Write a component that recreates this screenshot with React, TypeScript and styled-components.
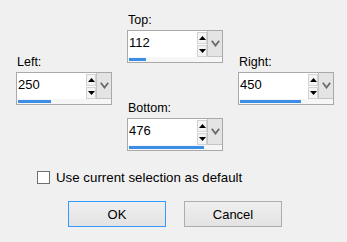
import React from "react";
import styled, { createGlobalStyle } from "styled-components";

const Global = createGlobalStyle`
  html, body { margin: 0; padding: 0; background: #f0f0f0; }
  body {
    font-family: "Liberation Sans", Arial, sans-serif;
    font-size: 12px;
    color: #000;
    width: 347px;
    height: 242px;
    overflow: hidden;
  }
`;

const Dialog = styled.div`
  width: 347px;
  height: 242px;
  box-sizing: border-box;
  padding: 0 0 0 16px;
  display: flex;
  flex-direction: column;
`;

const Fields = styled.div`
  display: flex;
  gap: 15px;
`;

const Column = styled.div<{ $offset: number }>`
  width: 96px;
  display: flex;
  flex-direction: column;
  gap: 38px;
  padding-top: ${(p) => p.$offset}px;
`;

const Field = styled.div`
  display: flex;
  flex-direction: column;
`;

const Label = styled.div`
  height: 15px;
  line-height: 15px;
  font-size: 12.5px;
  margin-bottom: 2px;
  padding-left: 1px;
`;

const SpinBox = styled.div`
  width: 96px;
  height: 33px;
  box-sizing: border-box;
  border: 1px solid #a9a9a9;
  background: #fff;
  display: flex;
  flex-direction: column;
`;

const InputRow = styled.div`
  height: 26px;
  display: flex;
`;

const Value = styled.div`
  flex: 1;
  padding: 5px 0 0 1px;
  font-size: 13px;
  line-height: 14px;
`;

const Spinner = styled.div`
  width: 10px;
  display: flex;
  flex-direction: column;
  gap: 1px;
  padding-top: 1px;
  box-sizing: border-box;
`;

const SpinButton = styled.div`
  flex: 1;
  background: #f4f4f4;
  border: 1px solid #d2d2d2;
  display: flex;
  align-items: center;
  justify-content: center;
`;

const DropButton = styled.div`
  width: 14px;
  background: #e4e4e4;
  border-left: 1px solid #c4c4c4;
  border-bottom: 1px solid #c4c4c4;
  display: flex;
  align-items: center;
  justify-content: center;
`;

const Track = styled.div`
  flex: 1;
  background: #f6f6f6;
  padding: 1px 0 0 1px;
`;

const Bar = styled.div`
  height: 3px;
  background: #3a8ee6;
`;

const CheckRow = styled.label`
  display: flex;
  align-items: center;
  gap: 6px;
  margin-top: 20px;
  padding-left: 21px;
  height: 13px;
  line-height: 13px;
  font-size: 13.3px;
`;

const CheckBox = styled.span`
  width: 13px;
  height: 13px;
  box-sizing: border-box;
  border: 1px solid #707070;
  background: #fff;
`;

const ButtonRow = styled.div`
  display: flex;
  gap: 18px;
  margin-top: 17px;
  padding-left: 52px;
`;

const Button = styled.button<{ $default?: boolean }>`
  width: 98px;
  height: 26px;
  box-sizing: border-box;
  border: 1px solid ${(p) => (p.$default ? "#3399ff" : "#adadad")};
  background: linear-gradient(#efefef, #e3e3e3);
  font-family: "Liberation Sans", Arial, sans-serif;
  font-size: 13px;
  color: #000;
  padding: 0;
`;

const Up = () => (
  <svg width="7" height="4" viewBox="0 0 7 4">
    <path d="M0 4 L3.5 0 L7 4 Z" fill="#000" />
  </svg>
);
const Down = () => (
  <svg width="7" height="4" viewBox="0 0 7 4">
    <path d="M0 0 L3.5 4 L7 0 Z" fill="#000" />
  </svg>
);
const Chevron = () => (
  <svg width="9" height="7" viewBox="0 0 9 7">
    <path d="M0.8 0.8 L4.5 5.6 L8.2 0.8" fill="none" stroke="#6a6a6a" strokeWidth="1.8" />
  </svg>
);

const Spin = ({ label, value, bar }: { label: string; value: string; bar: number }) => (
  <Field>
    <Label>{label}</Label>
    <SpinBox>
      <InputRow>
        <Value>{value}</Value>
        <Spinner>
          <SpinButton><Up /></SpinButton>
          <SpinButton><Down /></SpinButton>
        </Spinner>
        <DropButton><Chevron /></DropButton>
      </InputRow>
      <Track>
        <Bar style={{ width: bar }} />
      </Track>
    </SpinBox>
  </Field>
);

export default function App() {
  return (
    <>
      <Global />
      <Dialog>
        <Fields>
          <Column $offset={55}>
            <Spin label="Left:" value="250" bar={33} />
          </Column>
          <Column $offset={13}>
            <Spin label="Top:" value="112" bar={17} />
            <Spin label="Bottom:" value="476" bar={75} />
          </Column>
          <Column $offset={55}>
            <Spin label="Right:" value="450" bar={61} />
          </Column>
        </Fields>
        <CheckRow>
          <CheckBox />
          <span>Use current selection as default</span>
        </CheckRow>
        <ButtonRow>
          <Button $default>OK</Button>
          <Button>Cancel</Button>
        </ButtonRow>
      </Dialog>
    </>
  );
}
